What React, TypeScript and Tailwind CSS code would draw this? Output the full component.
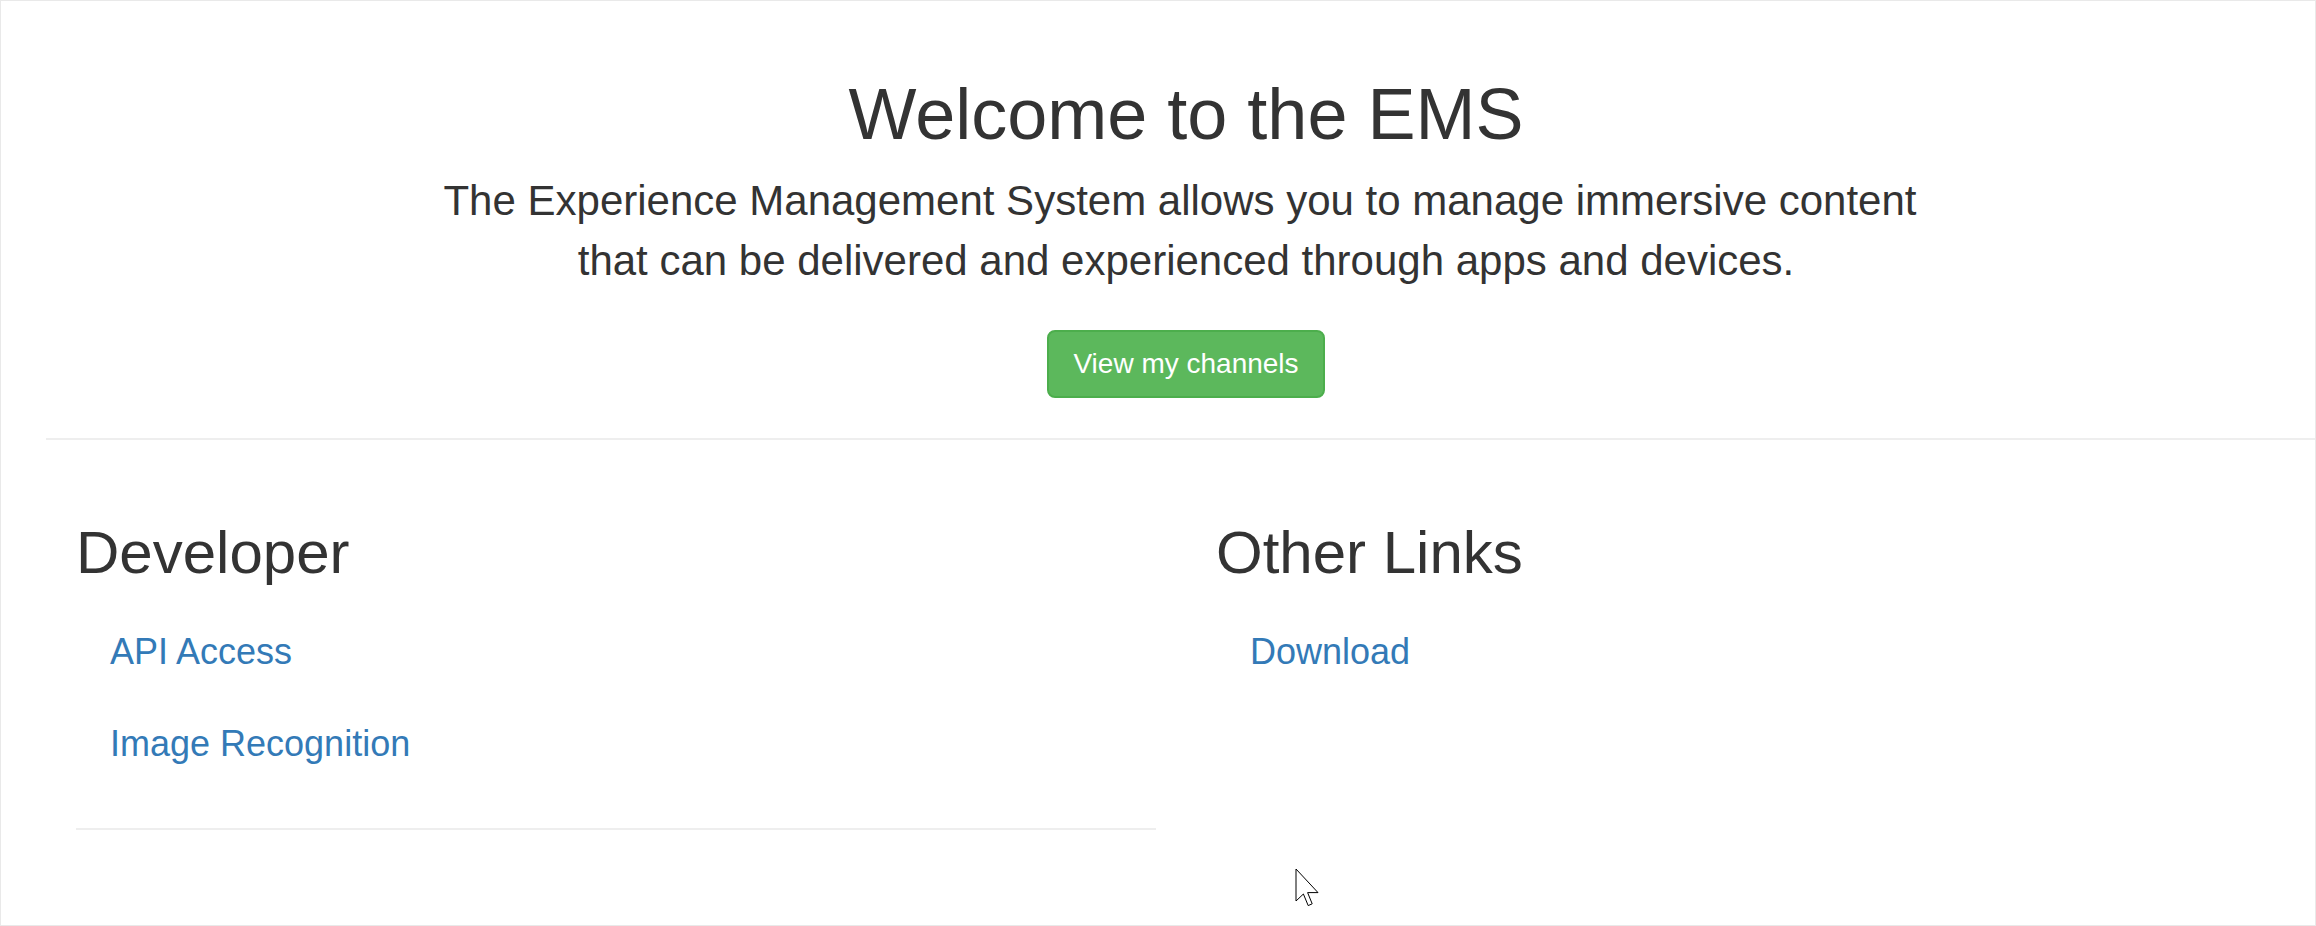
import React from "react";

export default function App() {
  return (
    <div className="relative h-[926px] overflow-hidden border border-[#e9e9e9] bg-white font-['Liberation_Sans',Arial,sans-serif] text-[#333333]">
      <div className="ml-[45px] w-[2280px]">
        <div className="pt-[74px] text-center">
          <h1 className="text-[72px] font-normal leading-[1.1]">Welcome to the EMS</h1>
          <p className="mx-auto mt-[17px] max-w-[1560px] text-[42px] leading-[60px]">
            <span className="pr-[12px]">The Experience Management System allows you to manage immersive content</span>
            <br />
            that can be delivered and experienced through apps and devices.
          </p>
          <div className="mt-[39px] flex justify-center">
            <button className="rounded-[8px] border-2 border-[#4cae4c] bg-[#5cb85c] px-[24px] py-[12px] text-[28px] leading-[40px] text-white">
              View my channels
            </button>
          </div>
        </div>
        <div className="mt-[40px] h-[2px] bg-[#eeeeee]" />
        <div className="grid grid-cols-2">
          <div className="px-[30px]">
            <h2 className="mt-[80px] mb-[20px] text-[60px] font-normal leading-[1.1]">Developer</h2>
            <ul>
              <li>
                <a href="#" className="block py-[20px] pl-[34px] text-[36px] leading-[1.42857] text-[#337ab7]">API Access</a>
              </li>
              <li>
                <a href="#" className="block py-[20px] pl-[34px] text-[36px] leading-[1.42857] text-[#337ab7]">Image Recognition</a>
              </li>
            </ul>
            <div className="mt-[39px] h-[2px] bg-[#eeeeee]" />
          </div>
          <div className="px-[30px]">
            <h2 className="mt-[80px] mb-[20px] text-[60px] font-normal leading-[1.1]">Other Links</h2>
            <ul>
              <li>
                <a href="#" className="block py-[20px] pl-[34px] text-[36px] leading-[1.42857] text-[#337ab7]">Download</a>
              </li>
            </ul>
          </div>
        </div>
      </div>
      <svg className="absolute left-[1294px] top-[867px]" width="26" height="40" viewBox="0 0 13 20">
        <path d="M0.5 0.5 L0.5 16.5 L4.2 13 L6.6 18.8 L8.6 17.9 L6.3 12.3 L11.5 12.3 Z" fill="white" stroke="black" strokeWidth="1" vectorEffect="non-scaling-stroke" strokeLinejoin="miter" />
      </svg>
    </div>
  );
}
